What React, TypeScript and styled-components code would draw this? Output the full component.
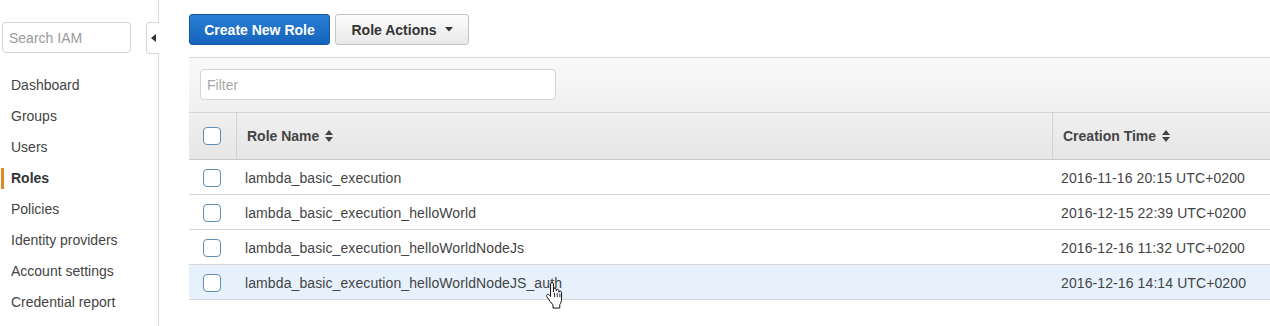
import React from 'react'
import styled, { createGlobalStyle } from 'styled-components'

const GlobalStyle = createGlobalStyle`
  html, body {
    margin: 0;
    padding: 0;
    background: #fff;
    font-family: "Liberation Sans", Arial, sans-serif;
    font-size: 14px;
    color: #444;
  }
  * { box-sizing: border-box; }
`

const Page = styled.div`
  display: flex;
  width: 1270px;
  height: 326px;
  overflow: hidden;
`

const Sidebar = styled.div`
  position: relative;
  width: 159px;
  flex-shrink: 0;
  border-right: 1px solid #dcdcdc;
  padding-top: 22px;
`

const SearchBox = styled.input`
  display: block;
  margin-left: 2px;
  width: 129px;
  height: 31px;
  border: 1px solid #d2d2d2;
  border-radius: 4px;
  padding: 0 6px;
  font-family: inherit;
  font-size: 14px;
  color: #444;
  outline: none;
  &::placeholder { color: #9a9a9a; }
`

const Collapse = styled.div`
  position: absolute;
  top: 22px;
  right: -1px;
  width: 13px;
  height: 32px;
  border: 1px solid #d6d6d6;
  border-right: none;
  border-radius: 4px 0 0 4px;
  background: #fff;
  display: flex;
  align-items: center;
  justify-content: center;
`

const Nav = styled.ul`
  list-style: none;
  margin: 17px 0 0;
  padding: 0;
`

const NavItem = styled.li<{ $active?: boolean }>`
  position: relative;
  height: 31px;
  line-height: 31px;
  padding-left: 11px;
  font-size: 14px;
  color: ${(p) => (p.$active ? '#333' : '#444')};
  font-weight: ${(p) => (p.$active ? 'bold' : 'normal')};
  &::before {
    content: '';
    display: ${(p) => (p.$active ? 'block' : 'none')};
    position: absolute;
    left: 1px;
    top: 5px;
    width: 3px;
    height: 21px;
    background: #e08a26;
  }
`

const Main = styled.div`
  flex: 1;
  padding: 14px 0 0 30px;
  min-width: 0;
`

const Toolbar = styled.div`
  display: flex;
  gap: 5px;
  height: 31px;
`

const PrimaryButton = styled.button`
  width: 141px;
  height: 31px;
  border: 1px solid #1558a8;
  border-radius: 3px;
  background: linear-gradient(#2a7fd4, #1563bd);
  color: #fff;
  font-family: inherit;
  font-weight: bold;
  font-size: 14px;
  padding: 0;
`

const DropButton = styled.button`
  display: flex;
  align-items: center;
  justify-content: center;
  gap: 8px;
  width: 134px;
  height: 31px;
  border: 1px solid #c4c4c4;
  border-radius: 3px;
  background: linear-gradient(#fbfbfb, #e9e9e9);
  color: #333;
  font-family: inherit;
  font-weight: bold;
  font-size: 14px;
  padding: 0;
`

const FilterBar = styled.div`
  margin-top: 12px;
  height: 55px;
  border-top: 1px solid #dadada;
  background: linear-gradient(#f9f9f9, #f0f0f0);
  padding: 11px 0 0 11px;
`

const FilterInput = styled.input`
  display: block;
  width: 356px;
  height: 31px;
  border: 1px solid #d4d4d4;
  border-radius: 4px;
  padding: 0 6px;
  font-family: inherit;
  font-size: 14px;
  outline: none;
  background: #fff;
  &::placeholder { color: #a8a8a8; }
`

const Table = styled.div`
  display: grid;
  grid-template-columns: 47px 816px 1fr;
`

const HeadCell = styled.div`
  height: 48px;
  display: flex;
  align-items: center;
  gap: 6px;
  padding-left: 10px;
  background: linear-gradient(#efefef, #e6e6e6);
  border-top: 1px solid #d4d4d4;
  border-bottom: 1px solid #cacaca;
  border-left: 1px solid #d2d2d2;
  font-weight: bold;
  color: #444;
  &:first-child {
    border-left: none;
    padding-left: 14px;
  }
`

const Cell = styled.div<{ $hover?: boolean }>`
  height: 35px;
  display: flex;
  align-items: center;
  padding: 1px 0 0 9px;
  border-bottom: 1px solid #d6d6d6;
  background: ${(p) => (p.$hover ? '#e6f1fc' : '#fff')};
  color: #444;
  white-space: nowrap;
  letter-spacing: 0.1px;
`

const CheckCell = styled(Cell)`
  padding-left: 14px;
`

const Box = styled.span`
  display: inline-block;
  width: 18px;
  height: 18px;
  border: 1px solid #5f8db5;
  border-radius: 4px;
  background: #fff;
`

const NameText = styled.span`
  position: relative;
`

const Pointer = styled.svg`
  position: absolute;
  left: 300px;
  top: 7px;
`

const SortIcon = () => (
  <svg width="8" height="12" viewBox="0 0 8 12">
    <path d="M4 0 L8 5 H0 Z M4 12 L8 7 H0 Z" fill="#444" />
  </svg>
)

const Caret = () => (
  <svg width="8" height="5" viewBox="0 0 8 5">
    <path d="M0 0 H8 L4 4.5 Z" fill="#333" />
  </svg>
)

const HandCursor = () => (
  <Pointer width="20" height="27" viewBox="0 0 18 24">
    <path
      d="M5 1.5c0-.8.6-1.3 1.3-1.3s1.3.5 1.3 1.3v7.3l.1-2.3c0-.7.6-1.2 1.2-1.2s1.2.5 1.2 1.2v1.2c0-.7.6-1.2 1.2-1.2s1.2.5 1.2 1.2v1.4c0-.7.6-1.1 1.2-1.1s1.2.5 1.2 1.2v5.6c0 2.6-.6 4.1-1.6 5.4v3.1H7.2v-2.9C5.4 18.4 3.6 16.3 2 13.6c-.6-1-.7-1.900-.1-2.4.7-.6 1.7-.2 2.3.6L5 13V1.5z"
      fill="#fff"
      stroke="#111"
      strokeWidth="0.9"
      strokeLinejoin="round"
    />
    <path d="M8.6 9.5v4M11 9.8v3.7M13.4 10.2v3.3" stroke="#111" strokeWidth="0.8" />
  </Pointer>
)

const navItems = [
  'Dashboard',
  'Groups',
  'Users',
  'Roles',
  'Policies',
  'Identity providers',
  'Account settings',
  'Credential report',
]

const roles = [
  { name: 'lambda_basic_execution', created: '2016-11-16 20:15 UTC+0200' },
  { name: 'lambda_basic_execution_helloWorld', created: '2016-12-15 22:39 UTC+0200' },
  { name: 'lambda_basic_execution_helloWorldNodeJs', created: '2016-12-16 11:32 UTC+0200' },
  { name: 'lambda_basic_execution_helloWorldNodeJS_auth', created: '2016-12-16 14:14 UTC+0200' },
]

export default function App() {
  return (
    <>
      <GlobalStyle />
      <Page>
        <Sidebar>
          <SearchBox placeholder="Search IAM" />
          <Collapse>
            <svg width="5" height="8" viewBox="0 0 5 8">
              <path d="M5 0 V8 L0 4 Z" fill="#333" />
            </svg>
          </Collapse>
          <Nav>
            {navItems.map((item) => (
              <NavItem key={item} $active={item === 'Roles'}>
                {item}
              </NavItem>
            ))}
          </Nav>
        </Sidebar>
        <Main>
          <Toolbar>
            <PrimaryButton>Create New Role</PrimaryButton>
            <DropButton>
              Role Actions <Caret />
            </DropButton>
          </Toolbar>
          <FilterBar>
            <FilterInput placeholder="Filter" />
          </FilterBar>
          <Table>
            <HeadCell>
              <Box />
            </HeadCell>
            <HeadCell>
              Role Name <SortIcon />
            </HeadCell>
            <HeadCell>
              Creation Time <SortIcon />
            </HeadCell>
            {roles.map((r, i) => {
              const hover = i === roles.length - 1
              return (
                <React.Fragment key={r.name}>
                  <CheckCell $hover={hover}>
                    <Box />
                  </CheckCell>
                  <Cell $hover={hover}>
                    <NameText>
                      {r.name}
                      {hover && <HandCursor />}
                    </NameText>
                  </Cell>
                  <Cell $hover={hover}>{r.created}</Cell>
                </React.Fragment>
              )
            })}
          </Table>
        </Main>
      </Page>
    </>
  )
}
